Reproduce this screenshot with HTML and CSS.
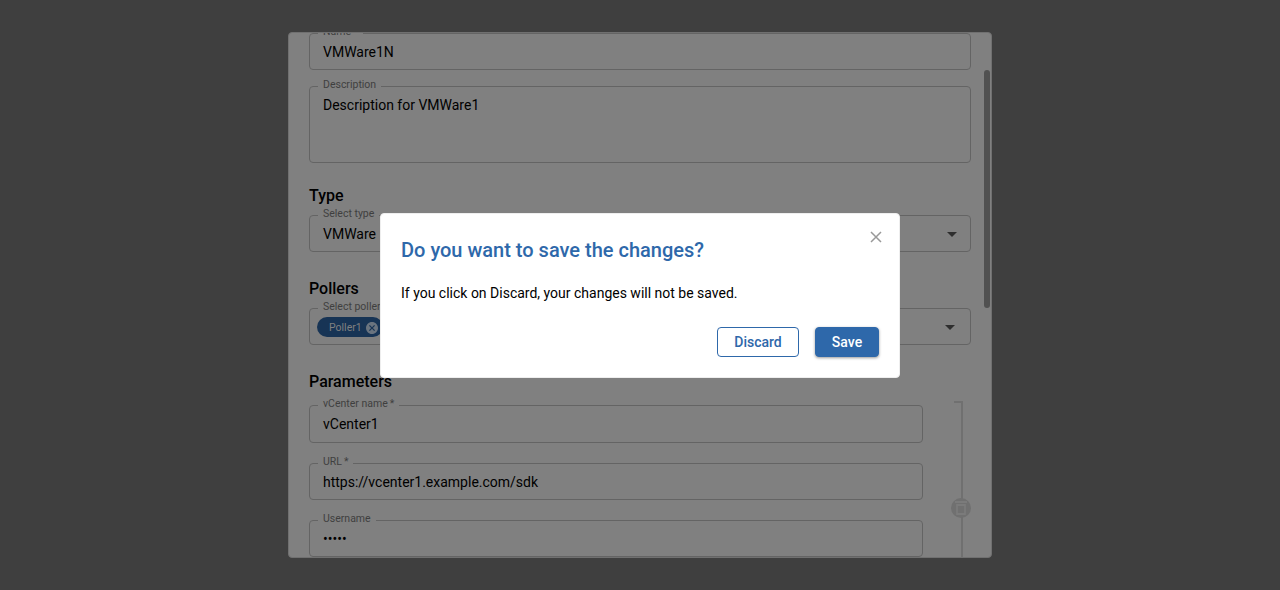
FILE: index.html
```html
<!DOCTYPE html>
<html lang="en">
<head>
<meta charset="utf-8">
<title>VMWare configuration</title>
<link rel="stylesheet" href="styles.css">
</head>
<body>
<main class="panel">
  <section class="general">
    <div class="field"><span class="label">Name<span class="star">*</span></span>VMWare1N</div>
    <div class="field area"><span class="label">Description</span>Description for VMWare1</div>
  </section>
  <section class="group">
    <h2>Type</h2>
    <div class="field"><span class="label">Select type</span>VMWare
      <svg class="caret" width="10" height="5" viewBox="0 0 10 5"><path d="M0 0h10L5 5z"/></svg></div>
  </section>
  <section class="group">
    <h2>Pollers</h2>
    <div class="field chips"><span class="label">Select pollers</span>
      <span class="chip"><span class="chip-text">Poller1</span><svg width="12" height="12" viewBox="2 2 20 20"><path d="M12 2C6.47 2 2 6.47 2 12s4.47 10 10 10 10-4.47 10-10S17.53 2 12 2zm5 13.59L15.59 17 12 13.41 8.41 17 7 15.59 10.59 12 7 8.41 8.41 7 12 10.59 15.59 7 17 8.41 13.41 12 17 15.59z"/></svg></span>
      <svg class="caret" width="10" height="5" viewBox="0 0 10 5"><path d="M0 0h10L5 5z"/></svg></div>
  </section>
  <section class="group">
    <h2>Parameters</h2>
    <div class="params">
      <div class="param-fields">
        <div class="field tall"><span class="label">vCenter name<span class="star">*</span></span>vCenter1</div>
        <div class="field"><span class="label">URL<span class="star">*</span></span>https://vcenter1.example.com/sdk</div>
        <div class="field"><span class="label">Username</span>•••••</div>
      </div>
      <div class="bracket">
        <span class="trash"><svg width="12" height="14" viewBox="0 0 12 14"><path d="M0 1h12M2 4h8v9H2z"/></svg></span>
      </div>
    </div>
  </section>
  <span class="scrollbar"></span>
</main>
<div class="dialog" role="dialog">
  <svg class="close" width="10" height="10" viewBox="0 0 10 10"><path d="M0 0l10 10M10 0L0 10"/></svg>
  <h1>Do you want to save the changes?</h1>
  <p>If you click on Discard, your changes will not be saved.</p>
  <div class="actions"><button class="discard">Discard</button><button class="save">Save</button></div>
</div>
</body>
</html>
```
FILE: styles.css
```css
* { box-sizing: border-box; }
body { margin: 0; height: 590px; padding: 32px 288px; background: #3f3f3f; overflow: hidden; font: 14px/20px Roboto, "Liberation Sans", sans-serif; color: #000; }
.panel { position: relative; width: 704px; height: 526px; border: 1px solid #707070; border-radius: 4px; background: #808080; padding: 0 20px; overflow: hidden; }
.general { display: flex; flex-direction: column; gap: 16px; }
.field { position: relative; height: 37px; border: 1px solid #646464; border-radius: 4px; padding: 8px 13px; white-space: nowrap; }
.area { height: 77px; }
.tall { height: 38px; }
.label { position: absolute; left: 8px; top: -8px; padding: 0 5px; background: #808080; color: #3f3f3f; font-size: 10.5px; line-height: 12px; }
.star { margin-left: 2px; }
.group h2 { margin: 0; height: 52px; padding-top: 22px; font-size: 16px; line-height: 22px; font-weight: 500; }
.group + .group h2 { height: 56px; padding-top: 26px; }
.caret { position: absolute; right: 13px; top: 16px; fill: #2e2e2e; }
.chips { padding: 8px 7px; }
.chips .caret { right: 15px; }
.chip { display: flex; align-items: center; gap: 4px; width: 66px; height: 20px; padding-left: 12px; border-radius: 10px; background: #173455; color: #808080; font-size: 10.5px; line-height: 20px; }
.chip-text { padding-top: 2px; }
.chip svg { margin-top: 1px; fill: #6a747f; }
.params { display: flex; gap: 31px; padding-top: 4px; }
.param-fields { width: 614px; display: flex; flex-direction: column; gap: 20px; }
.bracket { width: 9px; height: 200px; margin-top: -4px; border: 2px solid #707070; border-width: 2px 2px 0 0; position: relative; }
.trash { position: absolute; left: -3px; top: 95px; width: 20px; height: 20px; border-radius: 50%; background: #707070; display: flex; align-items: center; justify-content: center; }
.trash svg { fill: none; stroke: #7b7b7b; stroke-width: 1.8; }
.scrollbar { position: absolute; left: 695px; top: 37px; width: 6px; height: 238px; border-radius: 3px; background: #515151; }
.dialog { position: absolute; left: 380px; top: 213px; width: 520px; height: 165px; padding: 24px 20px 20px; border: 1px solid #eee; border-radius: 4px; background: #fff; }
.dialog h1 { margin: 0; font-size: 20px; line-height: 24px; font-weight: 500; color: #2e68aa; }
.dialog p { margin: 21px 0 24px; }
.close { position: absolute; right: 18px; top: 18px; stroke: #999; stroke-width: 1.5; overflow: visible; }
.actions { display: flex; justify-content: flex-end; gap: 16px; }
.actions button { height: 30px; padding: 0; border-radius: 4px; border: 1px solid #2e68aa; font: 500 14px/20px Roboto, "Liberation Sans", sans-serif; }
.discard { width: 82px; background: #fff; color: #2e68aa; }
.save { width: 64px; background: #2e68aa; color: #fff; box-shadow: 0 1px 3px rgba(0,0,0,.4); }
```
